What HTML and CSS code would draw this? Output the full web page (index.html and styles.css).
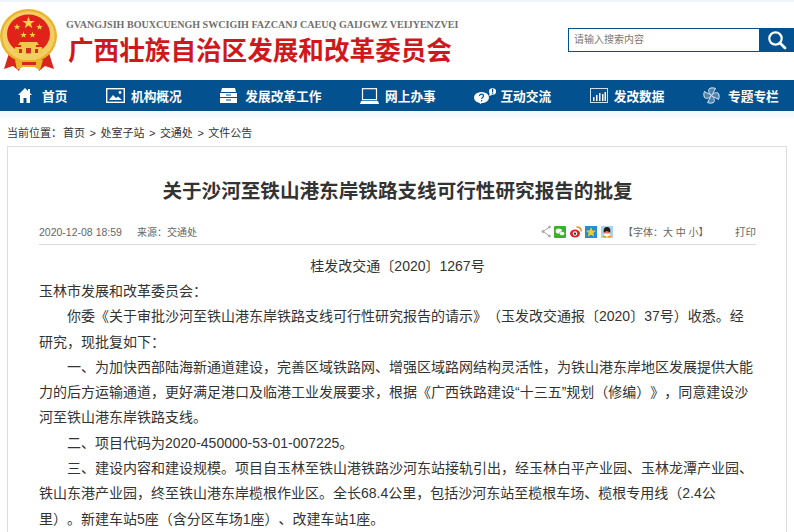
FILE: index.html
```html
<!DOCTYPE html>
<html lang="zh-CN">
<head>
  <meta charset="UTF-8" />
  <meta name="viewport" content="width=device-width, initial-scale=1.0"/>
  <title>关于沙河至铁山港东岸铁路支线可行性研究报告的批复</title>
  <link rel="stylesheet" href="styles.css">
</head>
<body>

  <div class="top-strip"></div>

  <div class="header">
    <svg class="emblem" width="58" height="64" viewBox="0 0 58 64">
      <defs>
        <polygon id="star" points="0,-1 .23,-.31 .95,-.31 .37,.12 .59,.81 0,.38 -.59,.81 -.37,.12 -.95,-.31 -.23,-.31"/>
      </defs>
      <path fill="#d8261c" d="M9 44l-5 16 9-3 6 5 4-14zM49 44l5 16-9-3-6 5-4-14z"/>
      <ellipse cx="28.500" cy="27" rx="28.500" ry="27" fill="#eab52c"/>
      <ellipse cx="28.500" cy="27" rx="26" ry="24.500" fill="#f3cf63"/>
      <ellipse cx="28.500" cy="25" rx="21.500" ry="19.500" fill="#e2211a"/>
      <g fill="#f7d63e">
        <use href="#star" transform="translate(28.500 14) scale(6.500)"/>
        <use href="#star" transform="translate(17 18) scale(3.500)"/>
        <use href="#star" transform="translate(39.500 18) scale(3.500)"/>
        <use href="#star" transform="translate(23.500 26) scale(3.500)"/>
        <use href="#star" transform="translate(32.500 26) scale(3.500)"/>
      </g>
      <path fill="#f2c84a" d="M20 33h17l2 3H18zM21 36h15v2H21zM15 38h27v6H15z"/>
      <path fill="#c9321c" d="M26 39h5v5h-5zM19 40h3v4h-3zM35 40h3v4h-3z"/>
      <path fill="#eab52c" d="M15 51h28l-3 10-6-3H23l-6 3z"/>
      <path fill="#d8261c" d="M22 53h14v3H22z"/>
    </svg>
    <div class="org">
      <div class="org-zhuang">GVANGJSIH BOUXCUENGH SWCIGIH FAZCANJ CAEUQ GAIJGWZ VEIJYENZVEI</div>
      <div class="org-name">广西壮族自治区发展和改革委员会</div>
    </div>
    <div class="search">
      <div class="search-input">请输入搜索内容</div>
      <div class="search-btn">
        <svg width="20" height="20" viewBox="0 0 20 20"><circle cx="8.500" cy="8.500" r="6.200" fill="none" stroke="#fff" stroke-width="2.200"/><path d="M13 13l5 5" stroke="#fff" stroke-width="2.800" stroke-linecap="round"/></svg>
      </div>
    </div>
  </div>

  <div class="nav">
    <a class="nav-item">
      <svg width="14" height="15" viewBox="0 0 14 15"><path fill="#fff" d="M7 0L0 7h2v8h3.500V10h3v5H12V7h2l-2-2V1h-2v2z"/></svg>
      <span class="nav-text home-text">首页</span>
    </a>
    <a class="nav-item">
      <svg width="19" height="15" viewBox="0 0 19 15"><rect x=".7" y=".7" width="17.600" height="13.600" fill="none" stroke="#fff" stroke-width="1.400"/><path fill="#fff" d="M3 12l4-5 3 3 2-1.500 4 3.500z"/><circle cx="14" cy="4.500" r="1.400" fill="#fff"/></svg>
      <span class="nav-text">机构概况</span>
    </a>
    <a class="nav-item wide">
      <svg width="17" height="15" viewBox="0 0 17 15"><path fill="#fff" d="M2 0h13l1 4H1zM0 5h17v4H0zM0 10h17v5H0z"/><path fill="#03518f" d="M6 6.500h5v1H6zM6 11.500h5v1H6z"/></svg>
      <span class="nav-text">发展改革工作</span>
    </a>
    <a class="nav-item">
      <svg width="19" height="16" viewBox="0 0 19 16"><rect x="2.500" y=".7" width="14" height="11" fill="none" stroke="#fff" stroke-width="1.200"/><path fill="#fff" d="M1 13h17l1 3H0z"/></svg>
      <span class="nav-text">网上办事</span>
    </a>
    <a class="nav-item chat">
      <svg width="22" height="16" viewBox="0 0 22 16"><ellipse cx="7.500" cy="9.500" rx="7.500" ry="5.500" fill="#fff"/><path fill="#fff" d="M5 13l1 3 4-2z"/><ellipse cx="18.500" cy="3.500" rx="3.500" ry="3.200" fill="#fff"/><path fill="#fff" d="M16 5l-1 3 3-1z"/><path fill="#03518f" d="M18 1h1.200v3.200H18zM18 4.800h1.200v1H18zM7 12h1.200v1.200H7z"/><path d="M5.500 8c0-2.500 4-2.500 4 0 0 1.500-1.900 1.300-1.900 3" fill="none" stroke="#03518f" stroke-width="1.200"/></svg>
      <span class="nav-text">互动交流</span>
    </a>
    <a class="nav-item">
      <svg width="18" height="15" viewBox="0 0 18 15"><rect x=".5" y=".5" width="17" height="14" fill="none" stroke="#cfe0ee"/><path fill="#fff" d="M3 9h1.500v4H3zM6 7h1.500v6H6zM9 5h1.500v8H9zM12 6h1.500v7H12zM14.500 4H16v9h-1.500z"/></svg>
      <span class="nav-text">发改数据</span>
    </a>
    <a class="nav-item">
      <svg width="17" height="17" viewBox="0 0 17 17" fill="#4a82b0" stroke="#e6eef5" stroke-width="1">
        <path id="blade" d="M8.500 8.500C5.500 6 5 3 6.500 1.500 8.500.5 11 .8 12.500 1.500 11 3.500 10.500 6 8.500 8.500z"/>
        <use href="#blade" transform="rotate(90 8.500 8.500)"/>
        <use href="#blade" transform="rotate(180 8.500 8.500)"/>
        <use href="#blade" transform="rotate(270 8.500 8.500)"/>
      </svg>
      <span class="nav-text bar-text">专题专栏</span>
    </a>
  </div>
  <div class="nav-shade"></div>

  <div class="crumbs">
    <span class="crumb-label">当前位置：</span>
    <span>首页</span><span>&gt;</span>
    <span>处室子站</span><span>&gt;</span>
    <span>交通处</span><span>&gt;</span>
    <span>文件公告</span>
  </div>

  <div class="card">
    <h1 class="title">关于沙河至铁山港东岸铁路支线可行性研究报告的批复</h1>
    <div class="meta">
      <span class="meta-date">2020-12-08 18:59</span>
      <span class="meta-source">来源：交通处</span>
      <div class="meta-right">
        <svg width="10" height="13" viewBox="0 0 10 13" fill="#a8a8a8" stroke="#a8a8a8"><path d="M8.500 2L2 6.500l6.500 4.500" fill="none"/><circle cx="8.500" cy="2" r=".9"/><circle cx="2" cy="6.500" r="1"/><circle cx="8.500" cy="11" r=".9"/></svg>
        <svg width="12" height="12" viewBox="0 0 12 12"><rect width="12" height="12" rx="1" fill="#3fae29"/><ellipse cx="4.800" cy="5" rx="3.200" ry="2.600" fill="#fff"/><ellipse cx="8" cy="7.500" rx="2.600" ry="2.100" fill="#fff" stroke="#3fae29" stroke-width=".5"/></svg>
        <svg width="12" height="12" viewBox="0 0 12 12"><ellipse cx="5" cy="7.500" rx="5" ry="4" fill="#d8232a"/><circle cx="5" cy="7.500" r="2.200" fill="#fff"/><circle cx="5" cy="7.700" r="1.100" fill="#222"/><path d="M6.500 1c2.800 0 4.800 1.800 4.800 4.600" fill="none" stroke="#e8912a" stroke-width="1.400"/></svg>
        <svg width="12" height="12" viewBox="0 0 12 12"><rect width="12" height="12" fill="#1f8fd6"/><polygon fill="#f6c92a" points="6,1 7.400,4.400 11,4.700 8.300,7 9.100,10.600 6,8.700 2.900,10.600 3.700,7 1,4.700 4.600,4.400"/></svg>
        <svg width="12" height="12" viewBox="0 0 12 12"><rect width="12" height="12" fill="#a9d3ea"/><ellipse cx="6" cy="5" rx="3.400" ry="4" fill="#1c1c1c"/><ellipse cx="6" cy="8" rx="3.200" ry="2.400" fill="#fff"/><path fill="#e8392a" d="M3 6.300h6v1.100H3z"/><ellipse cx="3.500" cy="10.700" rx="1.800" ry="1" fill="#f0a020"/><ellipse cx="8.500" cy="10.700" rx="1.800" ry="1" fill="#f0a020"/></svg>
        <span class="font-size">【字体：大 中 小】</span>
        <span class="print">打印</span>
      </div>
    </div>
    <div class="doc-no">桂发改交通〔2020〕1267号</div>
    <div class="body-text">
      <p class="flush">玉林市发展和改革委员会：</p>
      <p>你委《关于审批沙河至铁山港东岸铁路支线可行性研究报告的请示》（玉发改交通报〔2020〕37号）收悉。经研究，现批复如下：</p>
      <p>一、为加快西部陆海新通道建设，完善区域铁路网、增强区域路网结构灵活性，为铁山港东岸地区发展提供大能力的后方运输通道，更好满足港口及临港工业发展要求，根据《广西铁路建设“十三五”规划（修编）》，同意建设沙河至铁山港东岸铁路支线。</p>
      <p>二、项目代码为2020-450000-53-01-007225。</p>
      <p>三、建设内容和建设规模。项目自玉林至铁山港铁路沙河东站接轨引出，经玉林白平产业园、玉林龙潭产业园、铁山东港产业园，终至铁山港东岸榄根作业区。全长68.4公里，包括沙河东站至榄根车场、榄根专用线（2.4公里）。新建车站5座（含分区车场1座）、改建车站1座。</p>
    </div>
  </div>

</body>
</html>
```

FILE: styles.css
```css
html, body {
  margin: 0;
  padding: 0;
  height: 532px;
  overflow: hidden;
  background: #fff;
  font-family: "Liberation Sans", "Noto Sans CJK SC", sans-serif;
  text-spacing-trim: space-all;
  color: #333;
}
.top-strip {
  height: 2px;
  background: #f0f5fb;
}
.header {
  display: flex;
  align-items: flex-start;
  height: 78px;
}
.emblem {
  margin-top: 7px;
  flex: none;
}
.org {
  margin-left: 8px;
  margin-top: 16px;
}
.org-zhuang {
  font-family: "Liberation Serif", serif;
  font-weight: bold;
  font-size: 10.050px;
  line-height: 13px;
  color: #6f6f6f;
  white-space: nowrap;
}
.org-name {
  margin-left: 2px;
  margin-top: 2px;
  font-size: 25.600px;
  line-height: 36px;
  font-weight: bold;
  color: #d0181c;
  white-space: nowrap;
}
.search {
  margin-left: auto;
  margin-top: 26px;
  display: flex;
  width: 226px;
  height: 24px;
  border: 1px solid #03518f;
  border-right: none;
  box-sizing: border-box;
}
.search-input {
  flex: 1;
  padding-left: 5px;
  font-size: 10px;
  line-height: 22px;
  color: #777;
}
.search-btn {
  width: 35px;
  background: #03518f;
  display: flex;
  align-items: center;
  justify-content: center;
}
.nav {
  display: flex;
  align-items: center;
  gap: 38.600px;
  height: 31px;
  padding-left: 18px;
  background: #03518f;
}
.nav-item {
  display: flex;
  align-items: center;
  gap: 6px;
  color: #fff;
}
.nav-text {
  font-size: 12.700px;
  font-weight: bold;
  white-space: nowrap;
}
.home-text {
  margin-left: 4px;
}
.bar-text {
  margin-left: 2px;
}
.wide {
  gap: 8px;
}
.chat {
  gap: 4px;
}
.nav-shade {
  height: 7px;
  background: #f5f9fd;
}
.crumbs {
  display: flex;
  gap: 4.500px;
  padding-left: 7px;
  font-size: 11px;
  line-height: 16px;
  margin-top: 7px;
  color: #333;
}
.crumb-label {
  margin-right: -3.500px;
}
.card {
  margin: 5px 7px 0;
  padding: 0 30px 40px 31px;
  border: 1px solid #ddd;
  border-bottom: none;
}
.title {
  margin: 0;
  padding-top: 29px;
  font-size: 19.600px;
  line-height: 30px;
  font-weight: bold;
  text-align: center;
  color: #333;
}
.meta {
  display: flex;
  align-items: center;
  height: 25px;
  margin-top: 13px;
  font-size: 10.500px;
  color: #666;
  border-bottom: 1px solid #ddd;
}
.meta-date {
  margin-right: 15px;
}
.meta-source {
  font-size: 10px;
}
.meta-right {
  margin-left: auto;
  display: flex;
  align-items: center;
  gap: 3.500px;
}
.font-size {
  margin-left: 6.500px;
  font-size: 10px;
}
.print {
  margin-left: 23px;
}
.doc-no {
  margin-top: 9px;
  font-size: 14px;
  line-height: 25px;
  text-align: center;
}
.body-text p {
  margin: 0;
  font-size: 14px;
  line-height: 25.300px;
  text-indent: 28px;
}
.body-text .flush {
  text-indent: 0;
}
```
